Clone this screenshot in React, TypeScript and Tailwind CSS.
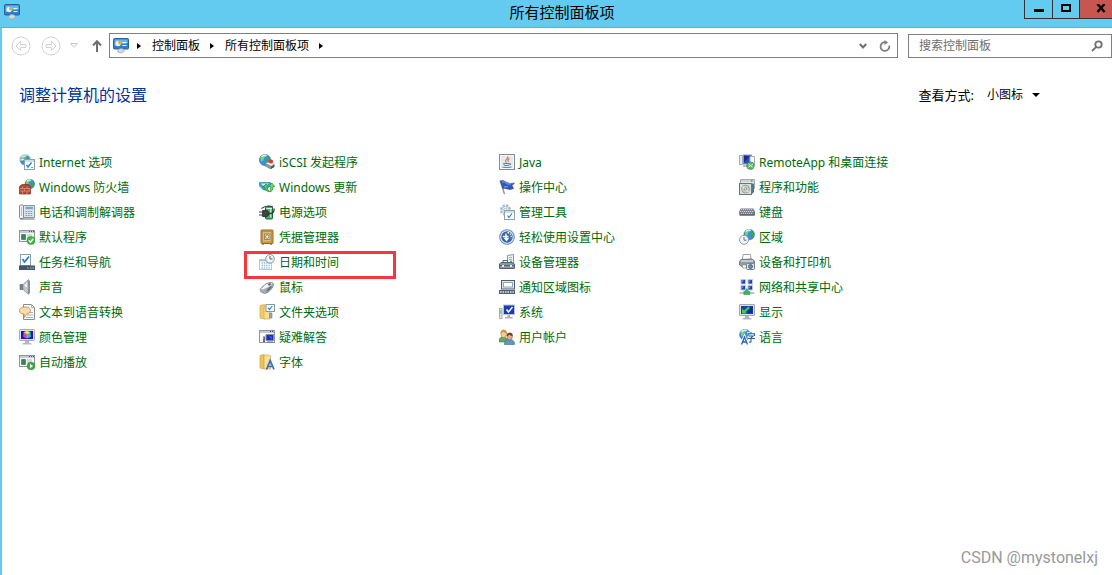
import React from "react";

const Globe = ({ x, y, r }: { x: number; y: number; r: number }) => (
  <g transform={`translate(${x} ${y}) scale(${r / 5})`}>
    <circle r="5" fill="#3b8fe0" stroke="#2a62b4" strokeWidth=".5" />
    <path d="M-4-2.5C-3-4.500-1-5 .5-4.700L1-3l-2 1.200L-1.500.5l-2 1z" fill="#7fd65c" />
    <path d="M1.500-1.500 4-2.800 4.800 0 3.500 3 2 3.800 1.500 1.500z" fill="#3fa833" />
    <path d="M-3-2.800Q-1-5 1.500-3.800" stroke="#d8f2ff" strokeWidth="1.200" fill="none" />
  </g>
);

const ControlPanelArt = () => (
  <>
    <rect x=".5" y=".5" width="15" height="10.500" rx="1" fill="#2a7fd0" stroke="#2d6097" />
    <path d="M1.500 1.500h13v4q-6 0-13 3z" fill="#62b5ee" />
    <circle cx="5.200" cy="5.500" r="2.700" fill="#e8f6ff" />
    <path d="M5.200 5.500V2.800A2.700 2.700 0 0 1 7.500 7z" fill="#f6a21b" />
    <path d="M9.500 4.500h4M9.500 7.500h4" stroke="#fff" />
    <path d="M4.500 14q0-3.500 3.500-3.500t3.500 2.500q-3 3.500-7 1z" fill="#d6d8da" stroke="#9a9da0" strokeWidth=".6" />
  </>
);

const WindowArt = () => (
  <>
    <rect x=".5" y="1.500" width="15" height="11" fill="#f6f8f9" stroke="#8d969c" />
    <path d="M1 3h14" stroke="#c3ccd2" strokeWidth="2" />
    <path d="M10 2.500h1M12 2.500h1M14 2.500h1" stroke="#4a5761" />
    <path d="M2.500 5.500h4v5h-4z" fill="#38864f" stroke="#3f7f8b" strokeWidth=".8" />
    <path d="M8 6h5M8 8h5M8 10h3" stroke="#b2babf" />
  </>
);

const art: Record<string, React.ReactNode> = {
  internet: (
    <>
      <Globe x={6} y={6} r={5} />
      <path d="M.6 7Q0 1.500 6 .7q4.500-.2 6 3.800" stroke="#c5dbe8" strokeWidth="1.200" fill="none" />
      <path d="M1 6q5-1.500 9 0" stroke="#d9ecf7" strokeWidth="1.200" fill="none" />
      <rect x="5.500" y="5.500" width="10" height="10" fill="#fcfdfe" stroke="#8ba0ac" />
      <path d="M6 7h9" stroke="#c3d0d8" strokeWidth="1.500" />
      <path d="m7.500 11 1.500 2 3.500-4.500" stroke="#2487ca" strokeWidth="1.400" fill="none" />
      <path d="M12 13.500h2" stroke="#8194a0" />
    </>
  ),
  firewall: (
    <>
      <Globe x={10.8} y={5} r={4.8} />
      <path d="M.5 7.500 3 5.500h6.500l2 2v7.500H.5z" fill="#ae4a36" stroke="#7c2c1d" strokeWidth=".7" />
      <path d="M1 9.500h10.500M1 12h10.500M3.500 7.500v2M8 7.500v2M5.500 9.500V12M10 9.500V12M3.500 12v3M8 12v3" stroke="#dc9278" strokeWidth=".8" />
    </>
  ),
  phone: (
    <>
      <path d="M4 1.500h11.500v12H4z" fill="#dde5ea" stroke="#8a98a3" />
      <rect x=".5" y="1" width="4" height="13.500" rx="1" fill="#eff3f5" stroke="#7f8e99" />
      <path d="M6.500 4h7.500" stroke="#76a8cc" strokeWidth="2.500" />
      <path d="M6.500 7.500h7.500M6.500 9.500h7.500M6.500 11.500h7.500" stroke="#8c9aa5" strokeWidth="1" strokeDasharray="1.700 .8" />
      <path d="M2.500 3v9" stroke="#b4bfc7" />
      <path d="M1 15h14.500" stroke="#5e6c76" />
    </>
  ),
  defaults: (
    <>
      <WindowArt />
      <circle cx="12" cy="11.500" r="4" fill="#44ba42" stroke="#2a912f" strokeWidth=".6" />
      <path d="m9.800 11.500 1.700 1.700 2.700-3.400" stroke="#fff" strokeWidth="1.400" fill="none" />
    </>
  ),
  taskbar: (
    <>
      <rect x="1.500" y=".5" width="10" height="11" fill="#fff" stroke="#8b9ca7" />
      <path d="m3.500 5 2 3L10 2.500" stroke="#247ed0" strokeWidth="1.700" fill="none" />
      <path d="M0 11.500h16V16H0z" fill="#43546b" />
      <path d="M8 14h1.500M11 14h1.500M13.500 14H15" stroke="#bacad8" strokeWidth="1.200" />
    </>
  ),
  sound: (
    <>
      <path d="M1 5.500h3v5H1z" fill="#78838c" stroke="#56616a" strokeWidth=".6" />
      <path d="m4 5.500 5.500-5v15L4 10.500z" fill="#bfc6cb" stroke="#868f96" strokeWidth=".7" />
      <path d="M8.500 1.500h2.500v13H8.500q2-6 0-13z" fill="#858f96" />
      <path d="m5 6.500 3-3v5z" fill="#edf1f3" />
    </>
  ),
  speech: (
    <>
      <path d="M4.500.5h8l3 3v12h-11z" fill="#fafbfb" stroke="#848d94" />
      <path d="M12.500.5v3h3M10 8.500h4M8 11h6M7 13.500h7" stroke="#a8b0b6" fill="none" />
      <path d="M.5 6.500Q.5 3 6 3t5.500 3.500q0 3-4 3.500L5.500 13.500 5 10Q.5 10 .5 6.500z" fill="#f9dcae" stroke="#cb935a" strokeWidth=".9" />
    </>
  ),
  color: (
    <>
      <rect x=".5" y=".5" width="15" height="11" rx="1" fill="#dfe3e7" stroke="#a3abb3" />
      <path d="M2 2h12v8H2z" fill="#1414c0" />
      <path d="M4.500 3 8 4v5.500L4.500 8z" fill="#f0508a" />
      <path d="m8 4 3.500-1v5L8 9.500z" fill="#25d8b8" />
      <path d="m4.500 3 3.500-1 3.500 1L8 5z" fill="#ffee4e" />
      <path d="m4.500 5.500 1.800.8v2.400L4.500 8z" fill="#c33ee4" />
      <path d="m9.700 6.200 1.800-.7V8l-1.800.8z" fill="#1ab8ed" />
      <path d="M6 12h4v1.500l2.500 1v1h-9v-1l2.500-1z" fill="#b4bac0" />
    </>
  ),
  autoplay: (
    <>
      <WindowArt />
      <circle cx="12" cy="12" r="3.800" fill="#3cae3d" stroke="#248130" strokeWidth=".6" />
      <path d="m11 9.800 3 2.200-3 2.200z" fill="#fff" />
    </>
  ),
  iscsi: (
    <>
      <Globe x={6} y={6} r={5.6} />
      <path d="m6 9.500 4-2 5.500 3-3.500 2z" fill="#e6ebee" stroke="#7d878e" strokeWidth=".6" />
      <path d="m6 9.500 6 3V15l-6-3z" fill="#9aa5ab" stroke="#5c6971" strokeWidth=".6" />
      <path d="m12 12.500 3.500-2V13L12 15z" fill="#4a545c" />
      <path d="M9.500 6.500 12 5.200l2 1.200v2.200l-2.300 1-2.200-1z" fill="#d23b2e" />
      <path d="M9 12.800h2" stroke="#36c54d" />
    </>
  ),
  update: (
    <>
      <path d="M.5 3.500h11L13 6H9.500L8 11H4.500L.5 7z" fill="#3da4cd" stroke="#2b86a3" strokeWidth=".7" />
      <path d="M2 4.500h8L7 6.500H3.500z" fill="#c9eefb" />
      <path d="M4 8 7 5l3 3H8.300q0 3 2.200 4.500Q6 12.500 5.700 8z" fill="#5cc75a" stroke="#1c853a" strokeWidth=".7" />
      <path d="M15.800 7.500 12.800 4 9.800 7.500h1.900q.5 3-1.200 5.500 4-1 3.600-5.500z" fill="#74db68" stroke="#1c853a" strokeWidth=".7" />
    </>
  ),
  power: (
    <>
      <rect x="6.500" y="2.500" width="7" height="12.500" rx="1" fill="#46b463" stroke="#1c6534" />
      <path d="M8 2.500V1h4v1.500M7.500 4.500h5.500" stroke="#e8eee7" strokeWidth="1.200" fill="none" />
      <path d="M11.700 5v8.500" stroke="#b5edbb" strokeWidth="1.300" />
      <path d="M3.500 6.500q6.500-1 6.500 3t-6.500 3z" fill="#3d4449" stroke="#1a1f22" strokeWidth=".7" />
      <path d="M0 8h4M0 11h4M2.500 4.500Q8 .5 14 3" stroke="#343c41" strokeWidth="1.100" fill="none" />
      <path d="M10 9.500h2q3.500-.5 3-5" stroke="#30393e" strokeWidth="1.300" fill="none" />
    </>
  ),
  vault: (
    <>
      <rect x="2" y="1" width="12" height="13.500" rx=".5" fill="#cf9f4a" stroke="#98692a" />
      <rect x="3.500" y="2.500" width="9" height="10.500" fill="#e0b96c" stroke="#b98b3f" strokeWidth=".8" />
      <rect x="5.500" y="5" width="5.500" height="5.500" fill="#e9e0c5" stroke="#8d7a50" strokeWidth=".8" />
      <circle cx="8.200" cy="7.700" r="1.700" fill="#faf7ea" stroke="#776d52" strokeWidth=".8" />
      <path d="M3 15.200h2M11 15.200h2" stroke="#98692a" />
    </>
  ),
  date: (
    <>
      <rect x=".5" y="5.500" width="12" height="10" fill="#fbfdfe" stroke="#b8c7d2" />
      <path d="M1 6.500h11" stroke="#a9c2d3" strokeWidth="1.600" />
      <path d="M2.500 9h9M2.500 11.500h9M2.500 14h9" stroke="#8cbfdf" strokeWidth="1.300" strokeDasharray="1.300 1" />
      <circle cx="11" cy="4.800" r="4.300" fill="#f1f4f6" stroke="#8797a4" />
      <path d="M11 2v3h2.500" stroke="#556470" fill="none" />
    </>
  ),
  mouse: (
    <>
      <path d="M1 10.500Q4 6.500 7.500 4.500 12 2.500 14 4q1.500 2-1 5.500-4 5-7.500 5-4.500-1-4.500-4z" fill="#a9aeb5" stroke="#777c83" strokeWidth=".7" />
      <path d="M2 10.500Q5 6.500 8 5q4-1.500 5.500-.5-2 3-6.500 4.500-3 1.500-5 1.500z" fill="#fafbfc" />
      <path d="M8.500 5 11 4l1.500 1.200L10 7zM8.500 10l3.500-3 1 1q-3 4-6 5z" fill="#626973" />
    </>
  ),
  folder: (
    <>
      <path d="M1 1.500 5.500.5v14.500L1 14z" fill="#f0cb68" stroke="#cfa347" strokeWidth=".7" />
      <path d="M5 2.500h6V15H5z" fill="#f9e08f" stroke="#d2a64d" strokeWidth=".7" />
      <rect x="7" y=".5" width="8.500" height="7" fill="#fafdff" stroke="#8398a7" />
      <path d="m9 3.800 1.500 1.700L13.300 2" stroke="#2684c6" strokeWidth="1.200" fill="none" />
      <path d="M10.500 9h2.500v5h-2.500z" fill="#8faebd" stroke="#6a8594" strokeWidth=".6" />
    </>
  ),
  trouble: (
    <>
      <rect x=".5" y="1.500" width="15" height="12" fill="#f8f9fa" stroke="#8b959d" />
      <path d="M1 3h14" stroke="#c0c9cf" strokeWidth="2" />
      <path d="M11 2.500h1M13 2.500h1" stroke="#323c44" />
      <path d="M7 5.500h7.500v6H7z" fill="#1c2cb9" stroke="#8993a5" />
      <path d="m9 6 4 2v3z" fill="#3460df" />
      <path d="M4 7.500h2V13H4z" fill="#5c6b78" />
      <path d="M4.500 8v2" stroke="#3cc765" />
      <path d="M8 13h6" stroke="#66737d" />
    </>
  ),
  fonts: (
    <>
      <path d="M1 1.500 5 .5v14.500l-4-1z" fill="#ecc45b" stroke="#cba04a" strokeWidth=".7" />
      <path d="M5 1h5.500l1 1v13H5z" fill="#f9e092" stroke="#d2a64d" strokeWidth=".7" />
      <path d="m7.500 15.500 3.700-9 3.800 9M8.800 12.500h4.700" stroke="#2f72c8" strokeWidth="1.700" fill="none" />
    </>
  ),
  java: (
    <>
      <rect x=".5" y=".5" width="15" height="15" fill="#e3e8ed" stroke="#7d8b99" />
      <rect x="1.500" y="1.500" width="13" height="13" fill="none" stroke="#f7f9fa" />
      <path d="M8.500 2.500Q9.500 4 7.500 5.500t0 3M10.500 4.500Q8 6 9.500 8" stroke="#e07a4e" strokeWidth="1.200" fill="none" />
      <path d="M4.500 9.500h6l-1 2h-4zM10.500 9.500q2.500 0 .5 1.700M3.500 13.200q4.500 1 9-.2" stroke="#55789f" strokeWidth=".9" fill="none" />
    </>
  ),
  flag: (
    <>
      <path d="m1 1.500 4.500 13.500" stroke="#8a949c" strokeWidth="1.400" />
      <path d="M1.500 2Q4 .5 7 3t8.500 1L13 6.500l1.500 3q-3 1.500-6 .5T4 9.500z" fill="#3058b8" stroke="#1f4291" strokeWidth=".6" />
      <path d="M3 3q3-.5 4 1t5 1M5 8q3-1 4 0" stroke="#86aaf0" fill="none" />
    </>
  ),
  admin: (
    <>
      <circle cx="6.500" cy="6" r="4.600" fill="#eef5fa" stroke="#a9c1d0" strokeWidth="2.200" strokeDasharray="2.400 1.200" />
      <circle cx="6.500" cy="6" r="3.600" fill="#edf4f8" stroke="#9ab4c4" strokeWidth=".8" />
      <circle cx="6.500" cy="6" r="1.700" fill="#fff" stroke="#94afc0" strokeWidth=".8" />
      <rect x="5.500" y="6.500" width="10" height="9" fill="#fff" stroke="#8fa0ab" />
      <path d="M6 8h9" stroke="#c3cfd6" strokeWidth="1.500" />
      <path d="m8.500 11.500 1.500 2 3-4" stroke="#2b88c6" strokeWidth="1.200" fill="none" />
    </>
  ),
  ease: (
    <>
      <circle cx="8" cy="8" r="7.300" fill="#e6edf8" stroke="#6c89b8" strokeWidth="1.100" />
      <circle cx="8" cy="8" r="5.700" fill="#2f5fba" />
      <path d="M3.800 7.500h5.700M7 4.500V10" stroke="#fff" strokeWidth="1.400" />
      <path d="m4.500 8.800 3 3.700 3-3.700z" fill="#fff" />
      <path d="M8.500 3.500q4.500 1 3.500 6" stroke="#fff" strokeWidth="1.300" fill="none" strokeDasharray="1.500 1" />
    </>
  ),
  device: (
    <>
      <path d="M8.500 1.500 14.500.5v10l-6-2z" fill="#eef2f4" stroke="#8b969e" />
      <path d="M10 3.500h3M10 5.500h3" stroke="#9fb3bf" />
      <path d="M11 7.500h2" stroke="#37b557" strokeWidth="1.500" />
      <path d="M2 8.500h11l2.500 1.500v4.500H.5V10z" fill="#8798a3" stroke="#55646f" />
      <path d="M4 8V6.500h4.500V8M1 11.500h14" stroke="#55646f" fill="none" />
      <path d="M3 11h2v2H3zM11 11h2v2h-2z" fill="#e3e9ec" />
    </>
  ),
  tray: (
    <>
      <rect x="2.500" y="1.500" width="13" height="8.500" fill="#dbe7f0" stroke="#4c5f70" />
      <rect x="4.500" y="3.500" width="9" height="4.500" fill="#fbfdfe" stroke="#8fa6b6" />
      <path d="M0 11h16v4H0z" fill="#4d6173" />
      <path d="M1 13h14" stroke="#e0eaf1" strokeWidth="1.600" strokeDasharray="1.600 .9" />
    </>
  ),
  system: (
    <>
      <rect x=".5" y="4.500" width="2.500" height="10" fill="#e2e7e9" stroke="#a4adb2" />
      <path d="M1 7h1.500M1 9h1.500" stroke="#52a65c" />
      <rect x="4.500" y="1" width="11" height="9.500" fill="#1c38c0" stroke="#bcc4c9" />
      <path d="m7.500 5.500 2 2.500 4-5" stroke="#fff" strokeWidth="1.500" fill="none" />
      <path d="M8.500 11H11v2h2.500v1.500H6V13h2.500z" fill="#aab3b9" />
    </>
  ),
  users: (
    <>
      <path d="M0 12q0-4 4-4t5 4v1H0z" fill="#67a766" stroke="#47804c" strokeWidth=".6" />
      <ellipse cx="4.700" cy="4.800" rx="2.800" ry="3.800" fill="#f3cd9c" stroke="#b17b3e" strokeWidth=".6" />
      <path d="M1.500 4.500Q1.500.7 4.700.7t3.200 3.800Q5.200 3.800 4.200 2.700 3 4.500 1.500 4.500z" fill="#c9983d" />
      <path d="M5.500 15q0-4.500 5-4.500t5 4.500v.5h-10z" fill="#5d97ca" stroke="#386793" strokeWidth=".6" />
      <ellipse cx="10.700" cy="7.500" rx="2.700" ry="3.600" fill="#e0ae82" stroke="#875a3a" strokeWidth=".6" />
      <path d="M7.700 7q0-3.300 3-3.300t3 3.300q-2.500-.5-3.500-1.500-1 1.500-2.500 1.500z" fill="#5c4434" />
    </>
  ),
  remote: (
    <>
      <rect x=".5" y="1.500" width="3" height="9" fill="#e2e8ec" stroke="#a3afb8" />
      <rect x="4.500" y="1" width="8" height="9" fill="#2a4ec8" stroke="#8996b6" />
      <path d="m5 1.500 6 1-6 6z" fill="#1c2a90" />
      <path d="M4 12h6" stroke="#9ba5ac" strokeWidth="1.400" />
      <path d="M11 2.500h4.500V11H11z" fill="#fafbfc" stroke="#a7b0b7" />
      <circle cx="11.500" cy="11.700" r="3.800" fill="#58b562" stroke="#347f46" strokeWidth=".6" />
      <path d="m9.500 10 1.800 1.700-1.800 1.700M13.700 10 12 11.700l1.700 1.700" stroke="#fff" fill="none" />
    </>
  ),
  programs: (
    <>
      <path d="M1.500.5h14v9h-14z" fill="#e4e9ec" stroke="#a0aab0" />
      <path d="M2 2h13" stroke="#c0c9ce" strokeWidth="1.500" />
      <path d="M12 2h1.500" stroke="#465a68" />
      <path d="M13 4.500h2v8.500l-2 2z" fill="#4a7691" />
      <rect x=".5" y="4.500" width="12" height="11" fill="#dbdeda" stroke="#6d7575" />
      <circle cx="6.500" cy="10" r="4" fill="#c6d0c3" stroke="#8b998e" strokeWidth=".8" />
      <circle cx="6.500" cy="10" r="1.200" fill="#fff" stroke="#6b8376" strokeWidth=".8" />
      <path d="m3.500 7.500 2 1.500M7.500 11l2 2" stroke="#fff" />
    </>
  ),
  keyboard: (
    <>
      <path d="M1.500 4.500h13l1.500 3V11q-.5.500-1 .5H1Q0 11 0 8z" fill="#777788" />
      <path d="M1.800 5.700h12.700M1 7.500h14M2 9.300h12" stroke="#d3d7e4" strokeWidth="1" strokeDasharray="1.200 .8" />
      <path d="M.5 11h15" stroke="#565662" />
    </>
  ),
  region: (
    <>
      <Globe x={10.2} y={5.5} r={5.3} />
      <circle cx="5" cy="10.800" r="4.500" fill="#f6f8f9" stroke="#8a9aa4" />
      <path d="M5 8v3.200h2.500" stroke="#5b717f" fill="none" />
    </>
  ),
  printer: (
    <>
      <path d="M4 .5h7.500l.5 5H3.500z" fill="#fff" stroke="#9ba2a6" />
      <path d="m2 5.500 11-.5 2.500 2v5l-12 1-3-2V7.500z" fill="#929ba2" stroke="#616a72" strokeWidth=".8" />
      <path d="M2 7h12" stroke="#d3d8da" strokeWidth="1.500" />
      <path d="M3 11h6v3H4z" fill="#fff" stroke="#8e959a" strokeWidth=".8" />
      <rect x="7.500" y="9.500" width="8" height="6" rx="1" fill="#dde3e7" stroke="#73828c" />
      <circle cx="11.500" cy="12.500" r="2" fill="#6394b5" stroke="#3f586c" strokeWidth=".8" />
    </>
  ),
  network: (
    <>
      <path d="M2 .5h4.500V5H2zM9 .5h4.500V5H9zM2 6.500h4.500V11H2zM9 6.500h4.500V11H9z" fill="#1d3fb4" stroke="#bfc9d4" />
      <path d="M3 1.500h2l-2 2zM10 1.500h2l-2 2zM3 7.500h2l-2 2zM10 7.500h2l-2 2z" fill="#6c9dec" />
      <path d="M.5 14h15" stroke="#a3afb9" strokeWidth="1.400" />
      <path d="m7.800 9.500 2 3h1v3h-6v-3h1z" fill="#35b95a" stroke="#1f8f45" strokeWidth=".5" />
    </>
  ),
  display: (
    <>
      <rect x=".5" y=".5" width="15" height="11" rx=".5" fill="#dde0e3" stroke="#a3a9ae" />
      <path d="M2 2h12v8H2z" fill="#1a3db8" />
      <path d="M9 4h4.500M9 6h4.500M9 8h4.500" stroke="#0a1c78" />
      <path d="M3 4.500v5h5L6.500 8 11 4 9.500 2.500 5 6.500z" fill="#3ad455" />
      <path d="M6 12h4v1.500l2.500 1v1h-9v-1l2.500-1z" fill="#b0b5b9" />
    </>
  ),
  language: (
    <>
      <Globe x={6} y={5.8} r={5.4} />
      <path d="m2.500 15.500 3-7.500 3 7.500M3.500 13h4" stroke="#fff" strokeWidth="3" fill="none" />
      <path d="M8 3h8v11H9z" fill="#fff" opacity=".75" />
      <path d="m2.500 15.500 3-7.500 3 7.500M3.500 13h4" stroke="#2a5eb0" strokeWidth="1.300" fill="none" />
      <path d="M12 3v1.500M9 7V4.700h6.500V7M10 7h4l-2 2v3.500q0 1-2 .5M9 9.500h7" stroke="#2a5eb0" strokeWidth="1.100" fill="none" />
    </>
  ),
};

const items: { icon: string; label: string; marked?: boolean }[] = [
  { icon: "internet", label: "Internet 选项" },
  { icon: "iscsi", label: "iSCSI 发起程序" },
  { icon: "java", label: "Java" },
  { icon: "remote", label: "RemoteApp 和桌面连接" },
  { icon: "firewall", label: "Windows 防火墙" },
  { icon: "update", label: "Windows 更新" },
  { icon: "flag", label: "操作中心" },
  { icon: "programs", label: "程序和功能" },
  { icon: "phone", label: "电话和调制解调器" },
  { icon: "power", label: "电源选项" },
  { icon: "admin", label: "管理工具" },
  { icon: "keyboard", label: "键盘" },
  { icon: "defaults", label: "默认程序" },
  { icon: "vault", label: "凭据管理器" },
  { icon: "ease", label: "轻松使用设置中心" },
  { icon: "region", label: "区域" },
  { icon: "taskbar", label: "任务栏和导航" },
  { icon: "date", label: "日期和时间", marked: true },
  { icon: "device", label: "设备管理器" },
  { icon: "printer", label: "设备和打印机" },
  { icon: "sound", label: "声音" },
  { icon: "mouse", label: "鼠标" },
  { icon: "tray", label: "通知区域图标" },
  { icon: "network", label: "网络和共享中心" },
  { icon: "speech", label: "文本到语音转换" },
  { icon: "folder", label: "文件夹选项" },
  { icon: "system", label: "系统" },
  { icon: "display", label: "显示" },
  { icon: "color", label: "颜色管理" },
  { icon: "trouble", label: "疑难解答" },
  { icon: "users", label: "用户帐户" },
  { icon: "language", label: "语言" },
  { icon: "autoplay", label: "自动播放" },
  { icon: "fonts", label: "字体" },
];

const Icon = ({ children }: { children: React.ReactNode }) => (
  <svg viewBox="0 0 16 16" className="size-4 shrink-0" aria-hidden="true">
    {children}
  </svg>
);

const Chevron = () => (
  <svg viewBox="0 0 5 8" className="h-2 w-[5px] shrink-0" aria-hidden="true">
    <path d="M0 1v6l4-3z" fill="#000" />
  </svg>
);

const NavCircle = ({ label, d }: { label: string; d: string }) => (
  <button aria-label={label} className="size-5">
    <svg viewBox="0 0 20 20" className="size-5" fill="none" stroke="#d2d2d2">
      <circle cx="10" cy="10" r="9" />
      <path d={d} />
    </svg>
  </button>
);

function TitleBar() {
  return (
    <header className="flex h-7 items-start border-b border-[#6fa9c6] bg-[#63caf0]">
      <div className="w-[100px] pt-1 pl-1">
        <Icon>
          <ControlPanelArt />
        </Icon>
      </div>
      <h1 className="flex-1 text-center text-[15px] leading-6">所有控制面板项</h1>
      <div className="flex h-[19px] w-[88px] border-b border-l border-[#333] text-black">
        <button aria-label="最小化" className="flex w-7 items-center justify-center border-r border-[#333]">
          <svg viewBox="0 0 10 10" className="size-[10px]">
            <path d="M0 5h10v3H0z" />
          </svg>
        </button>
        <button aria-label="最大化" className="flex w-[27px] items-center justify-center border-r border-[#333]">
          <svg viewBox="0 0 10 10" className="size-[10px]" fill="none" stroke="#000" strokeWidth="2">
            <path d="M1 1h8v6H1z" />
          </svg>
        </button>
        <button aria-label="关闭" className="flex flex-1 items-center justify-end bg-[#c75650] pr-[6px]">
          <svg viewBox="0 0 10 10" className="size-[10px]" fill="none" stroke="#000" strokeWidth="2.400">
            <path d="m1.500 0 7 8M8.500 0l-7 8" />
          </svg>
        </button>
      </div>
    </header>
  );
}

function AddressRow() {
  return (
    <div className="flex items-end pt-[5px]">
      <nav aria-label="导航" className="flex h-[25px] w-[107px] items-center pl-[9px]">
        <NavCircle label="后退" d="M5 10l4.500-4.500v3H15v3H9.500v3z" />
        <span className="w-[10px]" />
        <NavCircle label="前进" d="M15 10l-4.500-4.500v3H5v3h5.500v3z" />
        <button aria-label="最近位置" className="flex w-[26px] justify-center">
          <svg viewBox="0 0 8 5" className="h-[5px] w-2" fill="none" stroke="#c8c8c8">
            <path d="M.5.5h7L4 4.300z" />
          </svg>
        </button>
        <button aria-label="向上" className="flex w-5 justify-center">
          <svg viewBox="0 0 12 14" className="h-[14px] w-3" fill="none" stroke="#707070" strokeWidth="2">
            <path d="M6 13V2M2 6.500 6 2.300l4 4.200" />
          </svg>
        </button>
      </nav>
      <div className="flex h-[25px] flex-1 items-center border border-[#808080] pr-[6px] pl-[3px] text-xs">
        <Icon>
          <ControlPanelArt />
        </Icon>
        <ol className="ml-2 flex items-center">
          <li className="flex items-center gap-[10px]">
            <Chevron />
            <a href="#control-panel">控制面板</a>
          </li>
          <li className="ml-[10px] flex items-center gap-[10px]">
            <Chevron />
            <a href="#all-items">所有控制面板项</a>
            <Chevron />
          </li>
        </ol>
        <button aria-label="展开地址" className="ml-auto flex w-5 justify-center">
          <svg viewBox="0 0 8 8" className="size-2" fill="none" stroke="#707070" strokeWidth="2">
            <path d="m.8 2 3.200 3.500L7.200 2" />
          </svg>
        </button>
        <button aria-label="刷新" className="ml-[6px]">
          <svg viewBox="0 0 12 12" className="size-3" fill="none" stroke="#808080" strokeWidth="1.800">
            <path d="M10.200 5.500A4.400 4.400 0 1 1 6.500 2.200" />
            <path d="M5.500 0v5L9.200 2.500z" fill="#808080" stroke="none" />
          </svg>
        </button>
      </div>
      <label className="ml-[10px] flex h-6 w-[204px] items-center border border-[#808080] pr-2 pl-[10px]">
        <input
          type="search"
          aria-label="搜索控制面板"
          placeholder="搜索控制面板"
          className="min-w-0 flex-1 bg-transparent text-xs outline-none placeholder:text-[#6d6d6d]"
        />
        <svg viewBox="0 0 12 12" className="size-3" fill="none" stroke="#707070" strokeWidth="1.800">
          <circle cx="7.500" cy="4.500" r="3.200" />
          <path d="M5.300 6.800 1 11" />
        </svg>
      </label>
    </div>
  );
}

export default function App() {
  return (
    <div className="flex min-h-screen flex-col bg-white font-['Noto_Sans','Noto_Sans_CJK_SC',sans-serif] text-black">
      <TitleBar />
      <main className="flex flex-1 flex-col border-l-2 border-[#63caf0]">
        <AddressRow />
        <div className="flex items-center justify-between pt-[25px] pr-[72px] pl-[17px]">
          <h2 className="text-base leading-6 text-[#003399]">调整计算机的设置</h2>
          <div className="flex items-center">
            <label htmlFor="view" className="mr-[13px] text-[13px] leading-6">
              查看方式:
            </label>
            <select id="view" className="-mr-2 appearance-none bg-transparent pr-4 text-xs leading-6 outline-none">
              <option>小图标</option>
              <option>大图标</option>
              <option>类别</option>
            </select>
            <svg viewBox="0 0 8 4" className="pointer-events-none h-1 w-2" aria-hidden="true">
              <path d="M0 0h8L4 4z" />
            </svg>
          </div>
        </div>
        <ul className="grid grid-cols-[repeat(auto-fill,240px)] pt-[43px] pl-[17px]">
          {items.map((item) => (
            <li key={item.icon} className="relative flex h-[25px] items-start pt-1">
              <a
                href={`#${item.icon}`}
                className="flex items-start gap-1 text-xs leading-[18px] whitespace-nowrap text-[#006a0a]"
              >
                <Icon>{art[item.icon]}</Icon>
                <span>{item.label}</span>
              </a>
              {item.marked && (
                <span className="pointer-events-none absolute top-px -left-[15px] h-7 w-[152px] border-3 border-[#f6363a]" />
              )}
            </li>
          ))}
        </ul>
        <footer className="mt-auto self-end pr-[14px] pb-[5px] font-[Roboto,sans-serif] text-base leading-6 text-[#999]">
          CSDN @mystonelxj
        </footer>
      </main>
    </div>
  );
}
